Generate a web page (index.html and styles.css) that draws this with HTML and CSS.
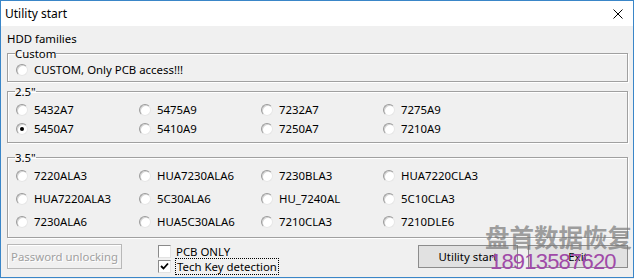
FILE: index.html
```html
<!DOCTYPE html>
<html>
<head>
<meta charset="utf-8">
<link rel="stylesheet" href="styles.css">
</head>
<body>
<div class="window">
  <div class="titlebar">
    <span class="title">Utility start</span>
    <svg class="close" width="10" height="10" viewBox="0 0 10 10"><path d="M0.5 0.5 L9.5 9.5 M9.5 0.5 L0.5 9.5" stroke="#000" stroke-width="1" fill="none"/></svg>
  </div>
  <div class="content">
    <div class="heading">HDD families</div>
    <fieldset class="group g-custom">
      <legend>Custom</legend>
      <label class="opt"><span class="radio"></span>CUSTOM, Only PCB access!!!</label>
    </fieldset>
    <fieldset class="group g-25">
      <legend>2.5"</legend>
      <div class="grid">
        <label class="opt"><span class="radio"></span>5432A7</label>
        <label class="opt"><span class="radio"></span>5475A9</label>
        <label class="opt"><span class="radio"></span>7232A7</label>
        <label class="opt"><span class="radio"></span>7275A9</label>
        <label class="opt"><span class="radio checked"></span>5450A7</label>
        <label class="opt"><span class="radio"></span>5410A9</label>
        <label class="opt"><span class="radio"></span>7250A7</label>
        <label class="opt"><span class="radio"></span>7210A9</label>
      </div>
    </fieldset>
    <fieldset class="group g-35">
      <legend>3.5"</legend>
      <div class="grid">
        <label class="opt"><span class="radio"></span>7220ALA3</label>
        <label class="opt"><span class="radio"></span>HUA7230ALA6</label>
        <label class="opt"><span class="radio"></span>7230BLA3</label>
        <label class="opt"><span class="radio"></span>HUA7220CLA3</label>
        <label class="opt"><span class="radio"></span>HUA7220ALA3</label>
        <label class="opt"><span class="radio"></span>5C30ALA6</label>
        <label class="opt"><span class="radio"></span>HU_7240AL</label>
        <label class="opt"><span class="radio"></span>5C10CLA3</label>
        <label class="opt"><span class="radio"></span>7230ALA6</label>
        <label class="opt"><span class="radio"></span>HUA5C30ALA6</label>
        <label class="opt"><span class="radio"></span>7210CLA3</label>
        <label class="opt"><span class="radio"></span>7210DLE6</label>
      </div>
    </fieldset>
    <div class="bottom">
      <button class="btn btn-disabled">Password unlocking</button>
      <div class="checks">
        <label class="chk"><span class="box"></span>PCB ONLY</label>
        <label class="chk"><span class="box checked"><svg width="9" height="9" viewBox="0 0 9 9"><path d="M1 4 L3.5 6.5 L8 1.5" stroke="#000" stroke-width="1.8" fill="none"/></svg></span><span class="focus">Tech Key detection</span></label>
      </div>
      <div class="actions">
        <button class="btn">Utility start</button>
        <button class="btn">Exit</button>
      </div>
    </div>
  </div>
  <div class="wm-cn">盘首数据恢复</div>
  <div class="wm-tel">18913587620</div>
</div>
</body>
</html>
```

FILE: styles.css
```css
html, body {
  margin: 0;
  padding: 0;
  background: #f0f0f0;
}
body {
  font-family: "Noto Sans", "DejaVu Sans", sans-serif;
  font-size: 11.4px;
  line-height: 15px;
  color: #000;
}
.window {
  position: relative;
  width: 634px;
  height: 278px;
  box-sizing: border-box;
  border: 1px solid #3a86c8;
  background: #f0f0f0;
  display: flex;
  flex-direction: column;
  overflow: hidden;
}
.titlebar {
  height: 25px;
  flex: none;
  background: #fff;
  display: flex;
  align-items: center;
  justify-content: space-between;
  padding: 0 10px 0 4px;
}
.title {
  font-size: 12px;
}
.content {
  padding: 5px 5px 0 6px;
}
.heading {
  height: 15px;
}
.group {
  margin: 0;
  border: 1px solid #a0a0a0;
  box-shadow: inset 1px 1px 0 #fff, 1px 1px 0 #fff;
  padding: 1px 6px 4px 7px;
  min-width: 0;
}
.group legend {
  padding: 0;
  margin-left: 0;
  line-height: 15px;
}
.g-25 {
  margin-top: 2px;
  padding-top: 3px;
  padding-bottom: 6px;
}
.g-35 {
  margin-top: 7px;
  padding-top: 3px;
  padding-bottom: 8px;
}
.grid {
  display: grid;
  grid-template-columns: 123px 122px 122px auto;
}
.g-25 .grid { row-gap: 4px; }
.g-35 .grid { row-gap: 8px; }
.opt {
  display: flex;
  align-items: center;
  height: 15px;
  white-space: nowrap;
}
.radio {
  flex: none;
  width: 12px;
  height: 12px;
  box-sizing: border-box;
  border-radius: 50%;
  margin: 0 6px 0 1px;
  background: #fff;
  border: 1px solid;
  border-color: #9a9a9a #e6e6e6 #e6e6e6 #9a9a9a;
  box-shadow: inset 1px 1px 0 #d4d4d4;
  display: flex;
  align-items: center;
  justify-content: center;
}
.radio.checked::after {
  content: "";
  width: 4px;
  height: 4px;
  border-radius: 50%;
  background: #000;
}
.bottom {
  display: flex;
  align-items: flex-start;
  margin-top: 6px;
}
.btn {
  font: inherit;
  line-height: 15px;
  margin: 0;
  padding: 0;
  background: #e1e1e1;
  border: 1px solid #8c8c8c;
  color: #000;
}
.btn-disabled {
  width: 115px;
  height: 25px;
  background: #f0f0f0;
  border-color: #b8b8b8;
  box-shadow: inset 1px 1px 0 #fff;
  color: #a0a0a0;
  text-shadow: 1px 1px 0 #fff;
}
.checks {
  margin-left: 36px;
  display: flex;
  flex-direction: column;
}
.chk {
  display: flex;
  align-items: center;
  height: 15px;
}
.box {
  flex: none;
  width: 13px;
  height: 13px;
  box-sizing: border-box;
  background: #fff;
  border: 1px solid;
  border-color: #8a8a8a #e3e3e3 #e3e3e3 #8a8a8a;
  margin-right: 5px;
  display: flex;
  align-items: center;
  justify-content: center;
}
.focus {
  outline: 1px dotted #000;
  outline-offset: 0;
  padding: 0 1px;
}
.actions {
  margin-left: auto;
  margin-top: 1px;
  display: flex;
  gap: 10px;
}
.actions .btn {
  width: 100px;
  height: 23px;
}
.wm-cn {
  position: absolute;
  left: 484px;
  top: 221px;
  font-family: "Noto Sans CJK SC", sans-serif;
  font-size: 24.5px;
  font-weight: 700;
  line-height: 30px;
  color: rgba(120, 120, 120, 0.7);
}
.wm-tel {
  position: absolute;
  left: 489px;
  top: 249px;
  font-family: "Liberation Sans", sans-serif;
  font-size: 22px;
  line-height: 24px;
  letter-spacing: -0.8px;
  color: #a04aa8;
}
```
